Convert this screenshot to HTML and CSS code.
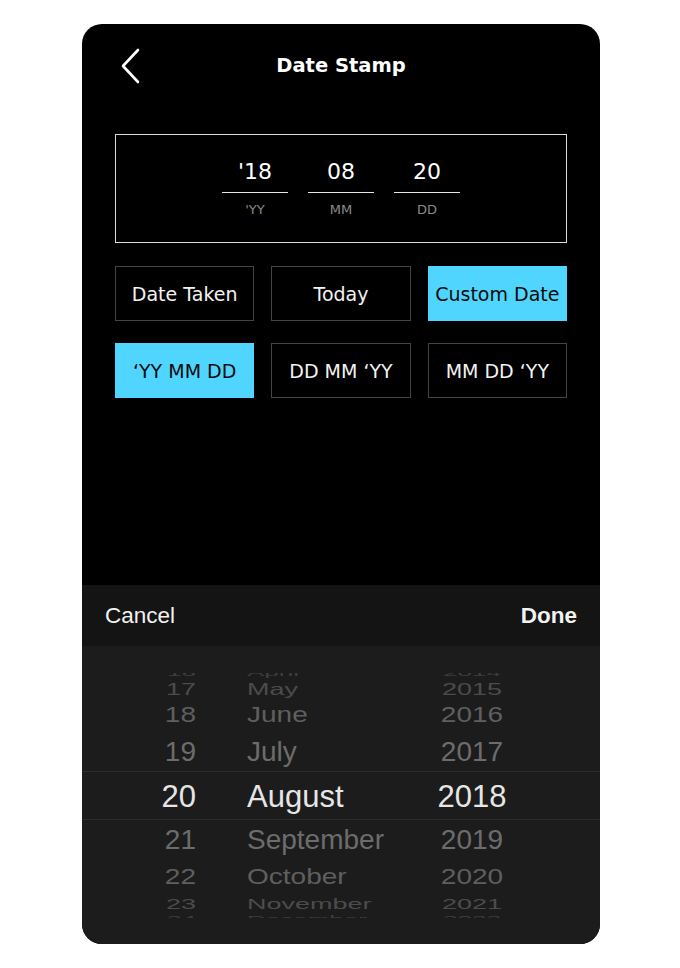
FILE: index.html
```html
<!DOCTYPE html>
<html lang="en">
<head>
<meta charset="utf-8">
<title>Date Stamp</title>
<link rel="stylesheet" href="styles.css">
</head>
<body>
<div class="phone">
  <header class="header">
    <div class="back">
      <svg width="22" height="36" viewBox="0 0 22 36"><path d="M17 2 L2 18 L17 34" fill="none" stroke="#fff" stroke-width="2.6" stroke-linecap="round" stroke-linejoin="round"/></svg>
    </div>
    <h1 class="title">Date Stamp</h1>
    <div></div>
  </header>

  <div class="content">
    <div class="datebox">
      <div class="field"><div class="val">'18</div><div class="lbl">'YY</div></div>
      <div class="field"><div class="val">08</div><div class="lbl">MM</div></div>
      <div class="field"><div class="val">20</div><div class="lbl">DD</div></div>
    </div>

    <div class="btns">
      <div class="btn">Date Taken</div>
      <div class="btn">Today</div>
      <div class="btn on">Custom Date</div>
      <div class="btn on">‘YY MM DD</div>
      <div class="btn">DD MM ‘YY</div>
      <div class="btn">MM DD ‘YY</div>
    </div>
  </div>

  <div class="sheet">
    <div class="toolbar">
      <span class="cancel">Cancel</span>
      <span class="done">Done</span>
    </div>
    <div class="wheel">
      <div class="viewport">
        <div class="row r16"><span class="d">16</span><span class="m">April</span><span class="y">2014</span></div>
        <div class="row r17"><span class="d">17</span><span class="m">May</span><span class="y">2015</span></div>
        <div class="row r18"><span class="d">18</span><span class="m">June</span><span class="y">2016</span></div>
        <div class="row r19"><span class="d">19</span><span class="m">July</span><span class="y">2017</span></div>
        <div class="row r20"><span class="d">20</span><span class="m">August</span><span class="y">2018</span></div>
        <div class="row r21"><span class="d">21</span><span class="m">September</span><span class="y">2019</span></div>
        <div class="row r22"><span class="d">22</span><span class="m">October</span><span class="y">2020</span></div>
        <div class="row r23"><span class="d">23</span><span class="m">November</span><span class="y">2021</span></div>
        <div class="row r24"><span class="d">24</span><span class="m">December</span><span class="y">2022</span></div>
      </div>
    </div>
  </div>
</div>
</body>
</html>
```

FILE: styles.css
```css
* { box-sizing: border-box; }
html, body { margin: 0; padding: 0; background: #fff; }
body { font-family: "DejaVu Sans", sans-serif; }

.phone {
  width: 518px;
  height: 920px;
  margin: 24px 0 0 82px;
  background: #000;
  border-radius: 20px;
  overflow: hidden;
  display: flex;
  flex-direction: column;
}

.header {
  height: 82px;
  display: grid;
  grid-template-columns: 1fr auto 1fr;
  align-items: center;
}
.back { padding-left: 39px; display: flex; align-items: center; padding-top: 1px; }
.back svg { display: block; }
.title {
  margin: 0;
  color: #fff;
  font-size: 19.5px;
  font-weight: bold;
  line-height: 24px;
  padding-top: 2px;
}

.content { padding: 28px 33px 0; flex: 1; }

.datebox {
  border: 1.5px solid #dcdcdc;
  height: 109px;
  display: flex;
  justify-content: center;
  gap: 20px;
  padding-top: 23px;
}
.field { width: 66px; text-align: center; }
.val {
  color: #fff;
  font-size: 22px;
  line-height: 28px;
  padding-bottom: 6px;
  border-bottom: 1.5px solid #e6e6e6;
}
.lbl {
  color: #8a8a8a;
  font-size: 13px;
  line-height: 14px;
  margin-top: 10px;
}

.btns {
  margin-top: 23px;
  display: grid;
  grid-template-columns: repeat(3, 1fr);
  column-gap: 17px;
  row-gap: 22px;
}
.btn {
  height: 55px;
  border: 1.5px solid #444;
  color: #f2f2f2;
  font-size: 19px;
  display: flex;
  align-items: center;
  justify-content: center;
  white-space: nowrap;
}
.btn.on {
  background: #4fd5fe;
  border-color: #4fd5fe;
  color: #0a0a0a;
}

.sheet { height: 359px; font-family: "Liberation Sans", Arial, sans-serif; }
.toolbar {
  height: 61px;
  background: #141414;
  display: flex;
  align-items: center;
  justify-content: space-between;
  padding: 0 23px 0 23px;
  font-size: 22.5px;
  color: #f2f2f2;
}
.done { font-weight: bold; }

.wheel {
  height: 298px;
  background: #1c1c1c;
  padding-top: 27px;
}
.viewport { height: 245px; overflow: hidden; }

.row {
  display: grid;
  grid-template-columns: 164px 174px 104px 1fr;
  align-items: center;
  color: #6b6b6b;
  font-size: 28px;
}
.row span { display: block; line-height: 1; }
.row .d { text-align: right; padding-right: 50px; }
.row .m { text-align: left; padding-left: 1px; }
.row .y { text-align: center; }

.r16 { margin-top: -9px; height: 16px; color: #3e3e3e; }
.r16 span { transform: translateY(-4px) scaleY(0.38); font-size: 26px; }
.r17 { height: 17px; color: #4c4c4c; }
.r17 span { transform: translateY(-3px) scaleY(0.58); font-size: 27px; }
.r18 { height: 36px; color: #5f5f5f; }
.r18 span { transform: scaleY(0.82); }
.r19 { height: 38px; color: #6c6c6c; }
.r19 span { transform: scaleY(0.97); }
.r20 {
  height: 49px;
  border-top: 1px solid #2c2c2c;
  border-bottom: 1px solid #2c2c2c;
  color: #e6e6e6;
  font-size: 31px;
}
.r20 span { padding-top: 1px; }
.r21 { height: 39px; color: #6c6c6c; }
.r21 span { transform: scaleY(0.97); }
.r22 { height: 35px; color: #5f5f5f; }
.r22 span { transform: scaleY(0.8); }
.r23 { height: 17px; color: #4c4c4c; }
.r23 span { transform: translateY(-3px) scaleY(0.56); font-size: 27px; }
.r24 { height: 16px; color: #3e3e3e; }
.r24 span { transform: translateY(-5px) scaleY(0.38); font-size: 26px; }
```
